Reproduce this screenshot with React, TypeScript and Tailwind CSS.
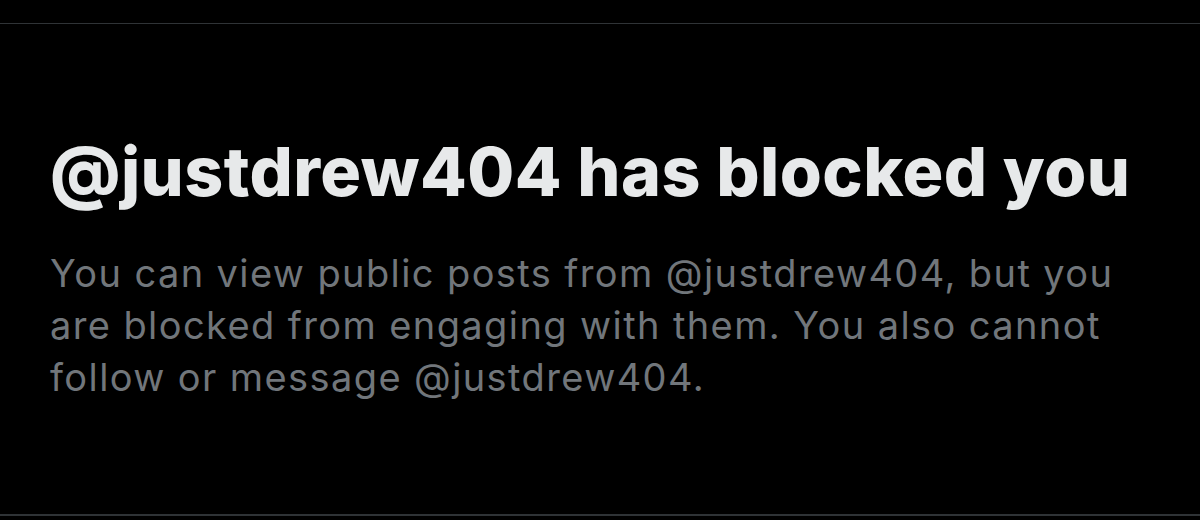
import React from 'react';

const handle = '@justdrew404';

const BlockedNotice: React.FC = () => {
  return (
    <div className="flex flex-col px-[50px]">
      <h1 className="text-[68px] leading-[68px] font-extrabold text-[#e7e9ea] tracking-[0.45px] whitespace-nowrap">
        {handle} has blocked you
      </h1>
      <p className="mt-[42px] text-[38px] leading-[52px] text-[#71767b] tracking-[1.4px] whitespace-nowrap">
        <span className="block">You can view public posts from {handle}, but you</span>
        <span className="block">are blocked from engaging with them. You also cannot</span>
        <span className="block">follow or message {handle}.</span>
      </p>
    </div>
  );
};

const App: React.FC = () => {
  return (
    <div className="w-[1200px] h-[520px] bg-black overflow-hidden" style={{ fontFamily: 'Inter, "Noto Sans", sans-serif' }}>
      <div className="mt-[23px] h-[493px] border-t border-b-2 border-[#2f3336] pt-[113px]">
        <BlockedNotice />
      </div>
    </div>
  );
};

export default App;
